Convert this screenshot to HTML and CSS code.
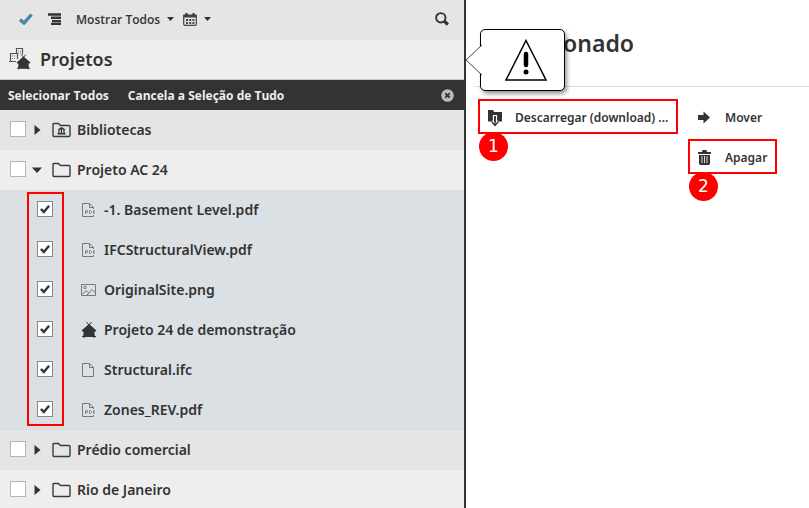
FILE: index.html
```html
<!DOCTYPE html>
<html lang="pt">
<head>
  <meta charset="UTF-8">
  <meta name="viewport" content="width=device-width, initial-scale=1.0">
  <title>Projetos</title>
  <link rel="stylesheet" href="styles.css">
</head>
<body>

  <!-- Formas usadas em mais de um lugar -->
  <svg width="0" height="0" class="sprite" aria-hidden="true">
    <symbol id="folder" viewBox="0 0 20 16">
      <path d="M1 13.5V2.5Q1 1.5 2 1.5H6.500L8.500 3.5H17Q18 3.5 18 4.5V13.5Q18 14.5 17 14.5H2Q1 14.5 1 13.5Z" fill="none" stroke="#3a3a3a" stroke-width="1.4"/>
    </symbol>
    <symbol id="house" viewBox="0 0 16 18">
      <path d="M5.500 1L8 4L10.500 1M3 14V17M13 14V17M1 15.500H15" fill="none" stroke="#333" stroke-width="1"/>
      <path d="M8 3L15.500 9.500L14.500 10.500H13.500V16H2.500V10.500H1.500L.5 9.500Z" fill="#333"/>
    </symbol>
    <symbol id="file" viewBox="0 0 16 16">
      <path d="M1.5 1.5H8.5L12.5 5.5V14.5H1.5ZM8.5 1.5V5.5H12.5" fill="none" stroke="#777" stroke-width="1"/>
    </symbol>
    <symbol id="pdf" viewBox="0 0 16 16">
      <path d="M12.5 7V5.5L8.5 1.5H1.5V14.5H12.5V13M8.5 1.5V5.5H12.5" fill="none" stroke="#777" stroke-width="1"/>
      <path d="M4.5 12V8.500H6.500V10.500H4.500M8.500 8.500H9.500L10.500 9.500V10.500L9.500 11.500H8.500ZM12.500 12V8.500H14M12.500 10.500H14" fill="none" stroke="#777" stroke-width=".8"/>
    </symbol>
  </svg>

  <div class="app">
    <aside class="sidebar">
      <div class="toolbar">
        <button class="tool check-tool" aria-label="Selecionar">
          <svg width="14" height="12" viewBox="0 0 14 12"><path d="M1 6.500L5 10L12.500 1.500" fill="none" stroke="#4588a8" stroke-width="3.400"/></svg>
        </button>
        <button class="tool list-tool" aria-label="Lista">
          <svg width="14" height="12" viewBox="0 0 14 12"><path d="M0 1.500H13M3 4.800H13M4 8.100H13M3 11H13" stroke="#333" stroke-width="2.400" fill="none"/></svg>
        </button>
        <button class="tool show-tool">Mostrar Todos
          <svg width="7" height="4" viewBox="0 0 7 4"><path d="M0 0H7L3.500 4Z" fill="#333"/></svg>
        </button>
        <button class="tool date-tool" aria-label="Calendário">
          <svg width="14" height="13" viewBox="0 0 14 13">
            <path d="M.5 1.500H13.500V4.500H.5Z" fill="#444"/>
            <path d="M.7 2V11Q.7 12.300 2 12.300H12Q13.300 12.300 13.300 11V2" fill="none" stroke="#444" stroke-width="1.200"/>
            <path d="M3.500 0V3M10.500 0V3" stroke="#333" stroke-width="2"/>
            <path d="M3 7H11.500M3 10H11.500" stroke="#444" stroke-width="2" stroke-dasharray="2 1.200"/>
          </svg>
          <svg width="7" height="4" viewBox="0 0 7 4"><path d="M0 0H7L3.500 4Z" fill="#333"/></svg>
        </button>
        <button class="tool search-tool" aria-label="Pesquisar">
          <svg width="14" height="14" viewBox="0 0 14 14">
            <circle cx="5.800" cy="5.800" r="4.700" fill="none" stroke="#333" stroke-width="1.900"/>
            <path d="M9 9L13 12.500" stroke="#333" stroke-width="3.200"/>
          </svg>
        </button>
      </div>

      <header class="title">
        <svg width="23" height="23" viewBox="0 0 23 23">
          <path d="M7.500 5V.5H13.500V6.500M1.500 13.500V5.500H8.500V11M0 13.500H7" fill="none" stroke="#555" stroke-width="1.200"/>
          <path d="M9 3H12M9 5H12M3 8H7M3 10.500H7" stroke="#777" stroke-dasharray="1 1"/>
          <use href="#house" x="7" y="5" width="15" height="18"/>
        </svg>
        <h1>Projetos</h1>
      </header>

      <div class="selection-bar">
        <button>Selecionar Todos</button>
        <button>Cancela a Seleção de Tudo</button>
        <button class="close" aria-label="Fechar">
          <svg width="13" height="13" viewBox="0 0 13 13">
            <circle cx="6.500" cy="6.500" r="6.300" fill="#bbb"/>
            <path d="M4.300 4.300L8.700 8.700M8.700 4.300L4.300 8.700" stroke="#333" stroke-width="1.800"/>
          </svg>
        </button>
      </div>

      <ul class="tree">
        <li>
          <div class="row">
            <input type="checkbox" id="bibliotecas">
            <svg class="arrow" width="12" height="12" viewBox="0 0 12 12"><path d="M3.500 1L9.500 6L3.500 11Z" fill="#333"/></svg>
            <svg class="folder" width="20" height="16" viewBox="0 0 20 16">
              <use href="#folder"/>
              <path d="M5.500 7.500L9.500 5L13.500 7.500ZM5.500 11H13.500V12.500H5.500Z" fill="#333"/>
              <path d="M7 7V11.500M9.500 7V11.500M12 7V11.500" stroke="#333" stroke-width="1.300"/>
            </svg>
            <label for="bibliotecas">Bibliotecas</label>
          </div>
        </li>
        <li>
          <div class="row light">
            <input type="checkbox" id="ac24">
            <svg class="arrow" width="12" height="12" viewBox="0 0 12 12"><path d="M1 3.500H11L6 9Z" fill="#333"/></svg>
            <svg class="folder" width="20" height="16"><use href="#folder"/></svg>
            <label for="ac24">Projeto AC 24</label>
          </div>
          <ul class="files">
            <li class="row">
              <input type="checkbox" id="basement" checked>
              <svg class="icon" width="16" height="16"><use href="#pdf"/></svg>
              <label for="basement">-1. Basement Level.pdf</label>
            </li>
            <li class="row">
              <input type="checkbox" id="ifcview" checked>
              <svg class="icon" width="16" height="16"><use href="#pdf"/></svg>
              <label for="ifcview">IFCStructuralView.pdf</label>
            </li>
            <li class="row">
              <input type="checkbox" id="site" checked>
              <svg class="icon" width="16" height="16" viewBox="0 0 16 16">
                <path d="M.5 2.500H14.500V13.500H.5ZM1 12.500L5 8.500L8 11.500M6 13L11 7.500L14.500 11" fill="none" stroke="#777"/>
                <circle cx="4" cy="5.500" r="1.200" fill="none" stroke="#777"/>
              </svg>
              <label for="site">OriginalSite.png</label>
            </li>
            <li class="row">
              <input type="checkbox" id="demo" checked>
              <svg class="icon" width="16" height="18"><use href="#house"/></svg>
              <label for="demo">Projeto 24 de demonstração</label>
            </li>
            <li class="row">
              <input type="checkbox" id="structural" checked>
              <svg class="icon" width="16" height="16"><use href="#file"/></svg>
              <label for="structural">Structural.ifc</label>
            </li>
            <li class="row">
              <input type="checkbox" id="zones" checked>
              <svg class="icon" width="16" height="16"><use href="#pdf"/></svg>
              <label for="zones">Zones_REV.pdf</label>
            </li>
          </ul>
        </li>
        <li>
          <div class="row">
            <input type="checkbox" id="predio">
            <svg class="arrow" width="12" height="12" viewBox="0 0 12 12"><path d="M3.500 1L9.500 6L3.500 11Z" fill="#333"/></svg>
            <svg class="folder" width="20" height="16"><use href="#folder"/></svg>
            <label for="predio">Prédio comercial</label>
          </div>
        </li>
        <li>
          <div class="row light">
            <input type="checkbox" id="rio">
            <svg class="arrow" width="12" height="12" viewBox="0 0 12 12"><path d="M3.500 1L9.500 6L3.500 11Z" fill="#333"/></svg>
            <svg class="folder" width="20" height="16"><use href="#folder"/></svg>
            <label for="rio">Rio de Janeiro</label>
          </div>
        </li>
      </ul>
    </aside>

    <main class="panel">
      <h2>Selecionado</h2>

      <!-- Balão de aviso sobre o título -->
      <div class="callout">
        <svg class="pointer" width="17" height="32" viewBox="0 0 17 32"><path d="M17 1L1 16L17 31" fill="#fff" stroke="#444"/></svg>
        <svg width="42" height="42" viewBox="0 0 42 42" role="img" aria-label="Aviso">
          <path d="M21 1.500L41 41H1Z" fill="none" stroke="#000" stroke-width="1.500"/>
          <path d="M21 15V26" stroke="#000" stroke-width="4.500" stroke-linecap="round"/>
          <circle cx="21" cy="33" r="2.500"/>
        </svg>
      </div>

      <div class="actions">
        <button class="action marked">
          <svg width="16" height="18" viewBox="0 0 16 18">
            <path d="M0 1H5L6 3H14V12.500H0Z" fill="#333"/>
            <path d="M5.500 13V6.500H8.500V13" fill="#333" stroke="#fff" stroke-width="1.200"/>
            <path d="M3.500 12.500L7 16.500L10.500 12.500" fill="none" stroke="#fff" stroke-width="3"/>
            <path d="M7 8V16M3.500 12.500L7 16.500L10.500 12.500" fill="none" stroke="#333" stroke-width="1.200"/>
          </svg>
          <span>Descarregar (download) ...</span>
          <b class="badge">1</b>
        </button>
        <button class="action">
          <svg width="16" height="18" viewBox="0 0 16 18"><path d="M0 6H5.500V2.500L12 8.500L5.500 14.500V11H0Z" fill="#333"/></svg>
          <span>Mover</span>
        </button>
        <button class="action marked delete">
          <svg width="16" height="18" viewBox="0 0 16 18">
            <path d="M0 3H4L4.500 1H8.500L9 3H13V5H0ZM1 6H12V14.500L11 16H2L1 14.500Z" fill="#333"/>
            <path d="M4 7V14M6.500 7V14M9 7V14" stroke="#ddd" stroke-width="1"/>
          </svg>
          <span>Apagar</span>
          <b class="badge">2</b>
        </button>
      </div>
    </main>
  </div>

</body>
</html>
```

FILE: styles.css
```css
*,
*::after {
  box-sizing: border-box;
}

body {
  margin: 0;
  font-family: "Noto Sans", "Open Sans", sans-serif;
  font-size: 14px;
  font-weight: 600;
  color: #333;
  background: #fff;
}

button {
  font: inherit;
  color: inherit;
  background: none;
  border: none;
  padding: 0;
  cursor: pointer;
}

svg {
  display: block;
  flex: none;
}

.sprite {
  position: absolute;
}

.app {
  display: grid;
  grid-template-columns: 466fr 343fr;
  height: 100vh;
  overflow: hidden;
}

.sidebar {
  background: #e5e5e5;
  border-right: 2px solid #333;
}

.toolbar {
  display: flex;
  align-items: center;
  height: 40px;
  padding: 0 15px 2px 19px;
  font-family: "Open Sans", "Noto Sans", sans-serif;
  font-size: 12px;
}

.tool {
  display: flex;
  align-items: center;
  height: 38px;
}

.check-tool {
  margin-right: 15px;
}

.list-tool {
  margin-right: 14px;
}

.show-tool {
  gap: 7px;
  margin-right: 9px;
}

.date-tool {
  gap: 7px;
}

.search-tool {
  margin-left: auto;
}

.title {
  display: flex;
  align-items: center;
  gap: 8px;
  height: 40px;
  padding: 0 9px 1px;
  background: #eee;
  border-bottom: 1px solid #ccc;
}

.title h1 {
  margin: 0;
  font-size: 18px;
  font-weight: 600;
}

.selection-bar {
  display: flex;
  align-items: center;
  gap: 19px;
  height: 30px;
  padding: 0 10px 0 8px;
  background: #333;
  color: #eee;
  font-family: "Open Sans", "Noto Sans", sans-serif;
  font-size: 12px;
  font-weight: 700;
}

.selection-bar .close {
  margin-left: auto;
}

/* Árvore de projetos */
.tree,
.files {
  list-style: none;
  margin: 0;
  padding: 0;
}

.row {
  display: flex;
  align-items: center;
  height: 40px;
  padding: 0 10px;
  border-bottom: 1px solid transparent;
}

.row.light {
  background: #eee;
}

.row input {
  appearance: none;
  flex: none;
  width: 16px;
  height: 16px;
  margin: 0 5px 1px 0;
  background: #fff;
  border: 1px solid #b5b5b5;
}

.row input:checked {
  border-color: #888;
}

.row input:checked::after {
  content: "";
  display: block;
  width: 10px;
  height: 9px;
  margin: 3px 2px;
  background: #333;
  clip-path: polygon(0 52%, 18% 36%, 38% 58%, 82% 0, 100% 16%, 40% 96%);
}

.folder {
  margin: 0 5px 0 9px;
}

.files {
  position: relative;
  background: #dbe0e4;
}

.files .row {
  padding-left: 37px;
  border-bottom-color: #dadddf;
}

.files .icon {
  margin: 0 7px 0 23px;
}

.files::after {
  content: "";
  position: absolute;
  top: 2px;
  bottom: 4px;
  left: 27px;
  width: 37px;
  border: 2px solid #f00;
  pointer-events: none;
}

/* Painel da direita */
.panel {
  position: relative;
  padding-left: 9px;
}

.panel h2 {
  margin: 0;
  height: 87px;
  padding: 28px 0 0 24px;
  border-bottom: 1px solid #ddd;
  font-size: 23px;
  line-height: 30px;
  font-weight: 600;
}

.callout {
  position: absolute;
  top: 29px;
  left: 14px;
  display: flex;
  justify-content: center;
  align-items: center;
  width: 85px;
  height: 62px;
  padding-left: 7px;
  background: #fff;
  border: 1px solid #000;
  border-radius: 5px;
  box-shadow: 2px 3px 4px rgba(0, 0, 0, 0.4);
}

.pointer {
  position: absolute;
  top: 14px;
  left: -16px;
}

.actions {
  display: grid;
  grid-template-columns: 200px auto;
  justify-content: start;
  justify-items: start;
  gap: 5px 10px;
  padding: 12px 0 0 3px;
}

.action {
  position: relative;
  display: flex;
  align-items: center;
  gap: 11px;
  height: 35px;
  padding: 2px 8px 0;
  border: 2px solid transparent;
  font-size: 12px;
  white-space: nowrap;
}

.action.marked {
  border-color: #f00;
}

.delete {
  grid-column: 2;
}

.badge {
  position: absolute;
  top: 31px;
  left: -1px;
  width: 29px;
  height: 29px;
  border-radius: 50%;
  background: #f00;
  color: #fff;
  font: 17px/29px "DejaVu Sans", sans-serif;
  text-align: center;
}
```
